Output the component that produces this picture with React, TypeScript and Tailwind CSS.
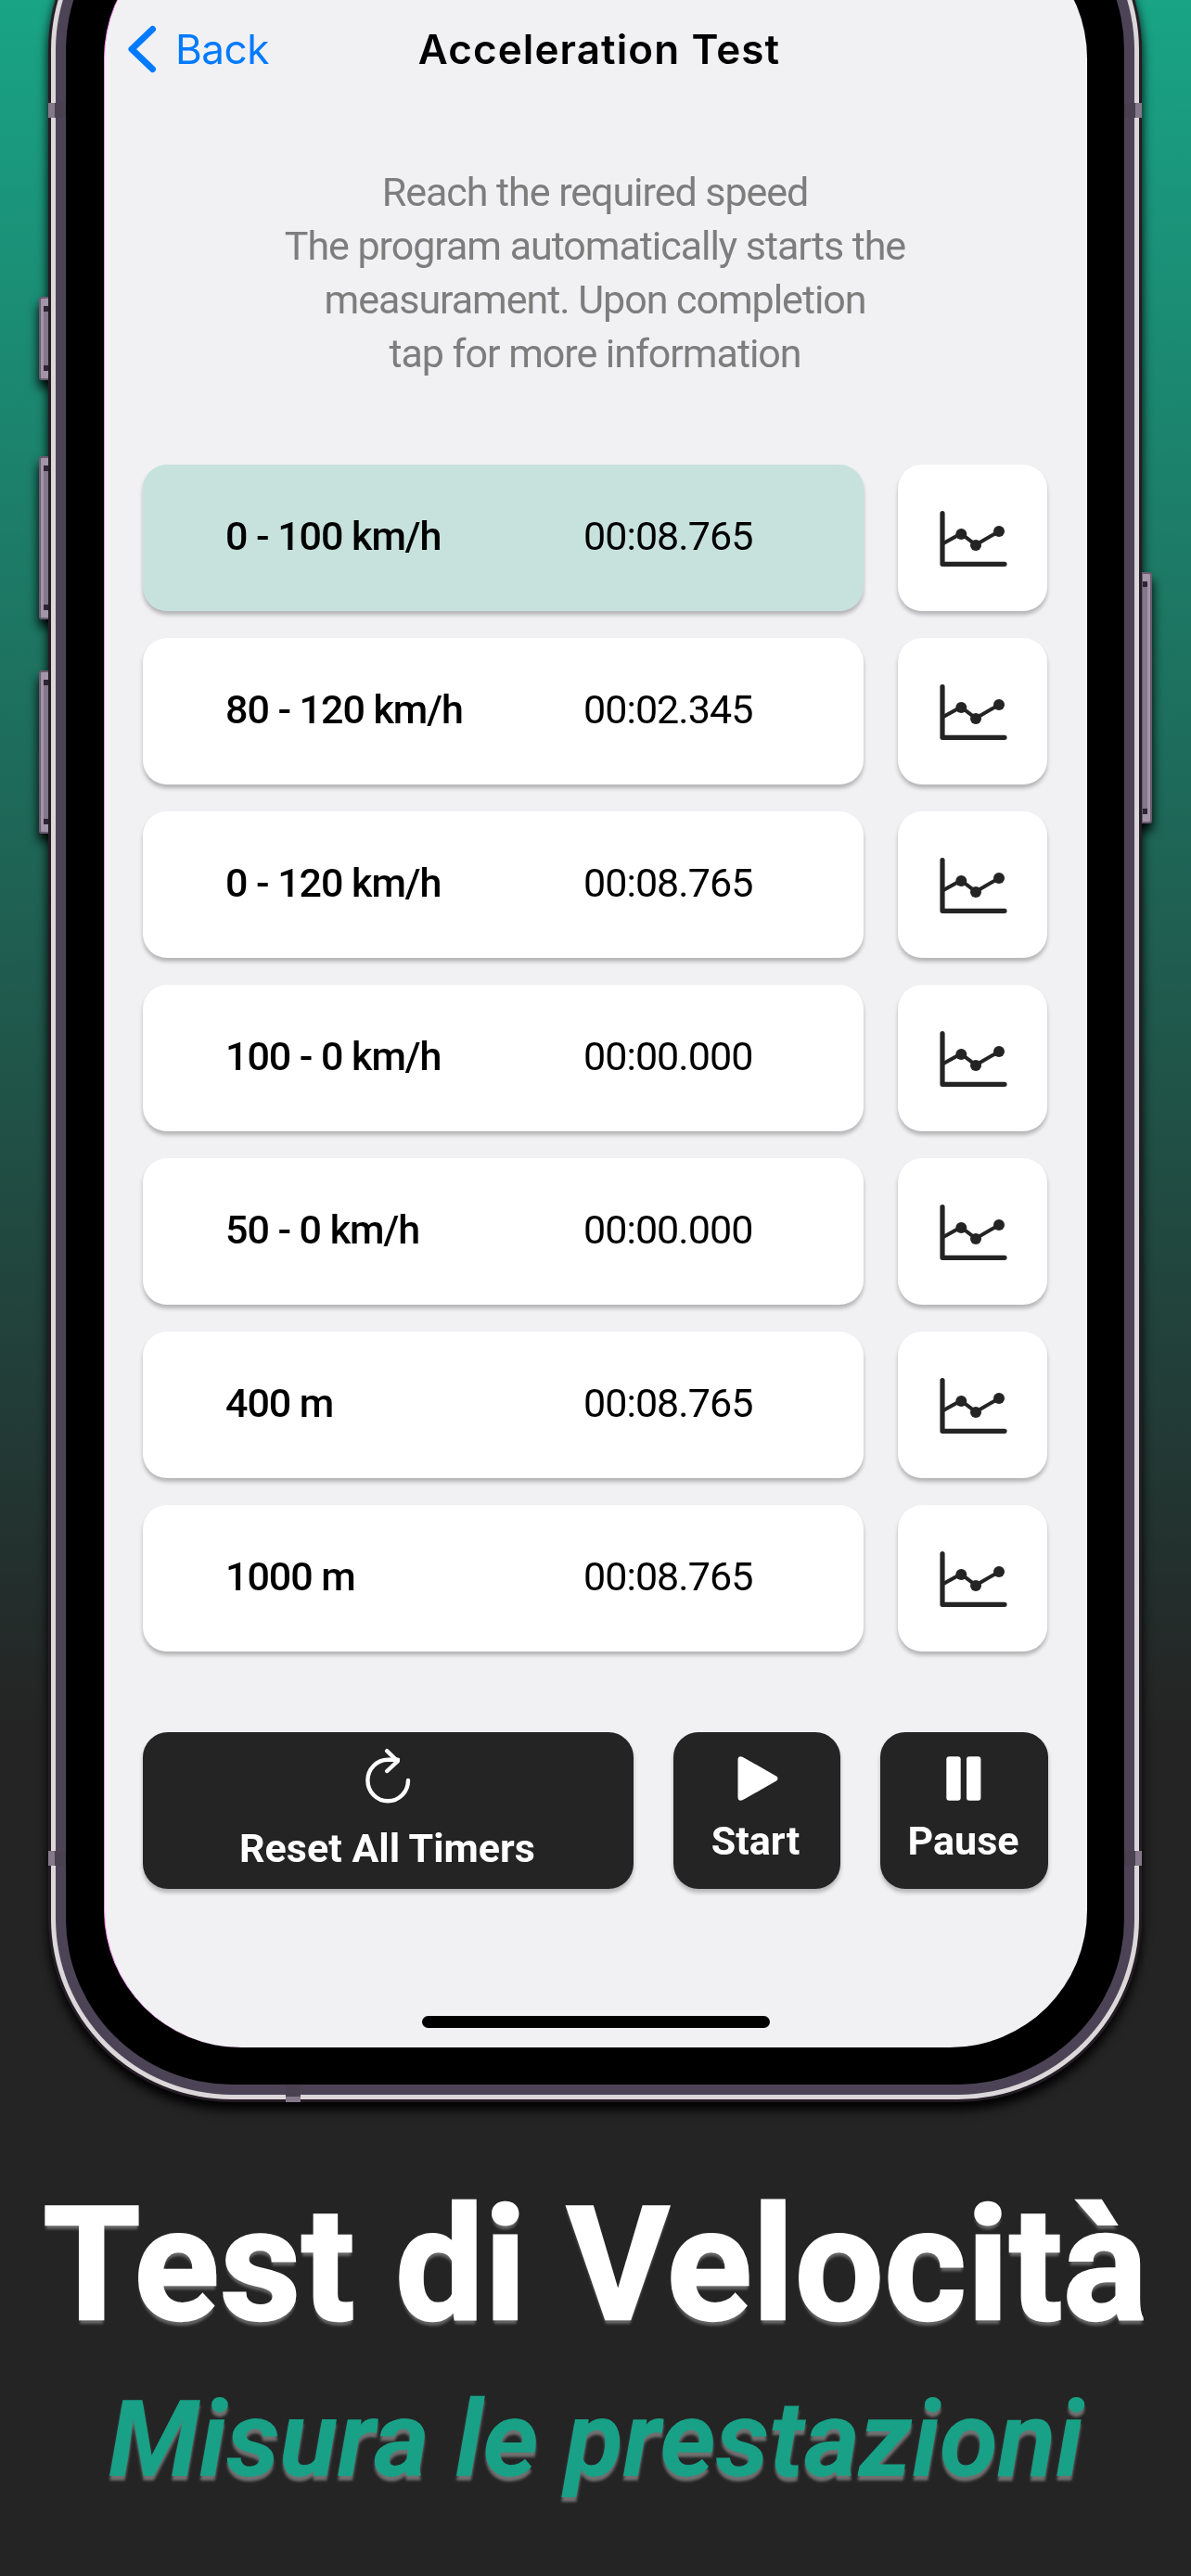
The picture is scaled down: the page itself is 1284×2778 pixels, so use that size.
import React from 'react';

interface Timer {
  label: string;
  time: string;
  active?: boolean;
}

const timers: Timer[] = [
  { label: '0 - 100 km/h', time: '00:08.765', active: true },
  { label: '80 - 120 km/h', time: '00:02.345' },
  { label: '0 - 120 km/h', time: '00:08.765' },
  { label: '100 - 0 km/h', time: '00:00.000' },
  { label: '50 - 0 km/h', time: '00:00.000' },
  { label: '400 m', time: '00:08.765' },
  { label: '1000 m', time: '00:08.765' },
];

function ChartIcon() {
  return (
    <svg width="76" height="64" viewBox="0 0 76 64" fill="none" stroke="#242424">
      <path d="M5 4.5V59.3H72" strokeWidth="5.2" strokeLinecap="round" strokeLinejoin="round" />
      <path d="M6 37L25 26.5L41 38.5L66 24" strokeWidth="4" />
      <g fill="#242424" stroke="none">
        <circle cx="25.3" cy="27" r="6" />
        <circle cx="41" cy="39" r="6" />
        <circle cx="66" cy="24" r="6" />
      </g>
    </svg>
  );
}

function ResetIcon() {
  return (
    <svg
      className="mr-[2px]"
      width="54"
      height="62"
      viewBox="0 0 54 62"
      fill="none"
      stroke="white"
      strokeWidth="4.4"
      strokeLinecap="round"
      strokeLinejoin="round"
    >
      <path d="M49 35A21.8 22.3 0 1 1 27.2 12.7H38" />
      <path d="M26.2 3.2L37.6 14.4L26.2 25" />
    </svg>
  );
}

function PlayIcon() {
  return (
    <svg className="ml-[2px]" width="44" height="48" viewBox="0 0 44 48" fill="white">
      <path d="M5.5 0.7L42 21.4Q45 24 42 26.6L5.5 47.3Q0.5 49 0.5 44V4Q0.5 -1 5.5 0.7Z" />
    </svg>
  );
}

function PauseIcon() {
  return (
    <svg className="mr-[2px]" width="38" height="48" viewBox="0 0 38 48" fill="white">
      <rect x="0.3" y="0.3" width="15.4" height="47.4" rx="3" />
      <rect x="22" y="0.3" width="15.4" height="47.4" rx="3" />
    </svg>
  );
}

function TimerRow({ timer }: { timer: Timer }) {
  return (
    <div className="flex gap-[37px]">
      <div
        className={`flex h-[158px] w-[777px] items-center rounded-[26px] pb-[3px] pl-[89px] text-[43px] leading-none text-black shadow-[0_4px_4px_rgba(0,0,0,0.25)] ${
          timer.active ? 'bg-[#c7e2dd]' : 'bg-white'
        }`}
      >
        <span className="w-[386px] font-medium tracking-[-1.05px]">{timer.label}</span>
        <span className="tracking-[-0.95px]">{timer.time}</span>
      </div>
      <button className="flex h-[158px] w-[161px] items-center justify-center rounded-[26px] bg-white pt-[2px] shadow-[0_4px_4px_rgba(0,0,0,0.25)]">
        <ChartIcon />
      </button>
    </div>
  );
}

const actionClass =
  'flex h-[169px] flex-col items-center rounded-[27px] bg-[#242424] text-[43px] leading-[50px] font-bold text-white shadow-[0_4px_4px_rgba(0,0,0,0.25)]';

function Screen() {
  return (
    <div className="flex h-[2293px] flex-col rounded-[148px] border-l border-[#f78cf0] bg-[#f1f1f3] pt-[85px]">
      {/* Navigation bar */}
      <div className="grid h-[106px] grid-cols-[1fr_auto_1fr] items-center font-[Inter,sans-serif] text-[44px] leading-none">
        <div className="flex items-center gap-[20px] pl-[24px] text-[#007aff]">
          <svg width="32" height="52" viewBox="0 0 32 52" fill="none" stroke="currentColor" strokeWidth="7" strokeLinecap="round" strokeLinejoin="round">
            <path d="M27.5 4.5L5 26L27.5 47.5" />
          </svg>
          <span className="tracking-[-0.5px]">Back</span>
        </div>
        <span className="pl-[7px] font-semibold tracking-[1.1px] text-black">Acceleration Test</span>
      </div>

      <p className="mt-[72px] pr-[2px] text-center text-[43px] leading-[58px] tracking-[-1.04px] text-[#7d7d7d]">
        Reach the required speed
        <br />
        The program automatically starts the
        <br />
        measurament. Upon completion
        <br />
        tap for more information
      </p>

      {/* Timers */}
      <div className="mt-[91px] flex flex-col gap-[29px] pl-[41px]">
        {timers.map((timer) => (
          <TimerRow key={timer.label} timer={timer} />
        ))}
      </div>

      {/* Actions */}
      <div className="mt-[87px] flex gap-[43px] pl-[41px]">
        <button className={`${actionClass} w-[529px] pt-[17px]`}>
          <ResetIcon />
          <span className="mt-[21px] mr-[2px]">Reset All Timers</span>
        </button>
        <button className={`${actionClass} w-[180px] pt-[26px]`}>
          <PlayIcon />
          <span className="mt-[18px] mr-[3px]">Start</span>
        </button>
        <button className={`${actionClass} w-[181px] pt-[26px]`}>
          <PauseIcon />
          <span className="mt-[18px] mr-[2px]">Pause</span>
        </button>
      </div>

      <div className="mt-[137px] ml-[342px] h-[13px] w-[375px] rounded-full bg-black" />
    </div>
  );
}

function SideButton({ className, side }: { className: string; side: 'left' | 'right' }) {
  return (
    <div className={`absolute border-2 border-[#6b5b70] bg-[#a395a8] ${className}`}>
      <div
        className={`absolute inset-y-[8px] w-[5px] border-y-[6px] border-[#2c2433] bg-[#84768c] ${
          side === 'left' ? 'right-0' : 'left-0'
        }`}
      />
    </div>
  );
}

function AntennaBand({ className }: { className: string }) {
  return <div className={`absolute border-[#85788a] bg-[#4a4150] ${className}`} />;
}

export default function App() {
  return (
    <div className="flex h-[2778px] w-[1284px] flex-col items-center overflow-hidden bg-linear-to-b/srgb from-[#19a486] to-[#242424] to-[67%] font-[Roboto,sans-serif]">
      {/* Phone */}
      <div className="relative mt-[-144px] mr-px h-[2411px] w-[1179px] shrink-0 drop-shadow-[0_8px_6px_rgba(0,0,0,1)]">
        <SideButton side="left" className="left-[-10px] top-[464px] h-[90px] w-[12px] rounded-l-[3px]" />
        <SideButton side="left" className="left-[-10px] top-[636px] h-[176px] w-[12px] rounded-l-[3px]" />
        <SideButton side="left" className="left-[-10px] top-[867px] h-[176px] w-[12px] rounded-l-[3px]" />
        <SideButton side="right" className="right-[-11px] top-[761px] h-[271px] w-[12px] rounded-r-[3px]" />

        <div className="relative rounded-[198px] bg-[#251d26] p-[3px]">
          <div className="rounded-[195px] bg-[#dcd8da] p-[5px]">
            <div className="rounded-[190px] bg-[#4c4456] p-[11px]">
              <div className="rounded-[179px] bg-black pt-[40px] pr-[40px] pb-[40px] pl-[41px]">
                <Screen />
              </div>
            </div>
          </div>
        </div>

        <AntennaBand className="left-0 top-[255px] h-[16px] w-[19px] border-l-[7px]" />
        <AntennaBand className="right-0 top-[255px] h-[16px] w-[19px] border-r-[7px]" />
        <AntennaBand className="left-0 top-[2140px] h-[16px] w-[19px] border-l-[7px]" />
        <AntennaBand className="right-0 top-[2140px] h-[16px] w-[19px] border-r-[7px]" />
        <AntennaBand className="bottom-0 left-[256px] h-[19px] w-[16px] border-b-[6px]" />
      </div>

      {/* Caption */}
      <h1 className="mt-[76px] text-[170px] leading-[200px] font-bold tracking-[0.6px] whitespace-nowrap text-white [-webkit-text-stroke:2.5px_white] [text-shadow:0_5px_3px_rgba(255,255,255,0.3)]">
        Test di Velocità
      </h1>
      <p className="mt-[18px] pl-px text-[115px] leading-[140px] font-bold whitespace-nowrap text-[#18a186] italic [text-shadow:0_5px_3px_rgba(255,255,255,0.35)]">
        Misura le prestazioni
      </p>
    </div>
  );
}
